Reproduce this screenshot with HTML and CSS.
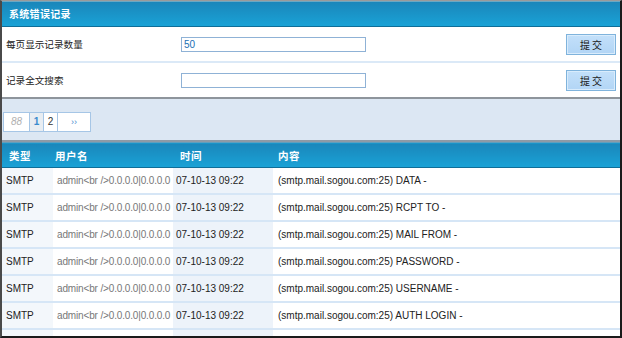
FILE: index.html
```html
<!DOCTYPE html>
<html>
<head>
<meta charset="utf-8">
<link rel="stylesheet" href="styles.css">
</head>
<body>
<div class="frame">
  <div class="titlebar">系统错误记录</div>
  <div class="formrow">
    <span class="label">每页显示记录数量</span>
    <input class="field" type="text" value="50">
    <button class="btn">提 交</button>
  </div>
  <div class="formrow last">
    <span class="label">记录全文搜索</span>
    <input class="field" type="text" value="">
    <button class="btn">提 交</button>
  </div>
  <div class="pager-panel">
    <div class="pager">
      <span class="pg dis">88</span>
      <span class="pg cur">1</span>
      <span class="pg">2</span>
      <span class="pg next">››</span>
    </div>
  </div>
  <table class="grid">
    <colgroup><col class="c1"><col class="c2"><col class="c3"><col class="c4"></colgroup>
    <thead>
      <tr><th class="h1">类型</th><th class="h2">用户名</th><th class="h3">时间</th><th class="h4">内容</th></tr>
    </thead>
    <tbody>
      <tr><td class="t">SMTP</td><td class="u">admin&lt;br /&gt;0.0.0.0|0.0.0.0</td><td class="d">07-10-13 09:22</td><td class="m">(smtp.mail.sogou.com:25) DATA -</td></tr>
      <tr><td class="t">SMTP</td><td class="u">admin&lt;br /&gt;0.0.0.0|0.0.0.0</td><td class="d">07-10-13 09:22</td><td class="m">(smtp.mail.sogou.com:25) RCPT TO -</td></tr>
      <tr><td class="t">SMTP</td><td class="u">admin&lt;br /&gt;0.0.0.0|0.0.0.0</td><td class="d">07-10-13 09:22</td><td class="m">(smtp.mail.sogou.com:25) MAIL FROM -</td></tr>
      <tr><td class="t">SMTP</td><td class="u">admin&lt;br /&gt;0.0.0.0|0.0.0.0</td><td class="d">07-10-13 09:22</td><td class="m">(smtp.mail.sogou.com:25) PASSWORD -</td></tr>
      <tr><td class="t">SMTP</td><td class="u">admin&lt;br /&gt;0.0.0.0|0.0.0.0</td><td class="d">07-10-13 09:22</td><td class="m">(smtp.mail.sogou.com:25) USERNAME -</td></tr>
      <tr><td class="t">SMTP</td><td class="u">admin&lt;br /&gt;0.0.0.0|0.0.0.0</td><td class="d">07-10-13 09:22</td><td class="m">(smtp.mail.sogou.com:25) AUTH LOGIN -</td></tr>
      <tr><td class="t">SMTP</td><td class="u">admin&lt;br /&gt;0.0.0.0|0.0.0.0</td><td class="d">07-10-13 09:22</td><td class="m">(smtp.mail.sogou.com:25) HELO/EHLO -</td></tr>
    </tbody>
  </table>
</div>
</body>
</html>
```
FILE: styles.css
```css
html, body {
  margin: 0;
  padding: 0;
  background: #fff;
}
body {
  font-family: "Liberation Sans", "Noto Sans CJK SC", sans-serif;
  font-size: 10px;
  color: #222;
}
.frame {
  width: 622px;
  height: 338px;
  box-sizing: border-box;
  border-top: 1px solid #9a9a9a;
  border-left: 2px solid #4a4a4a;
  border-right: 2px solid #1a1a1a;
  border-bottom: 2px solid #1a1a1a;
  overflow: hidden;
  background: #fff;
}
.titlebar {
  height: 24px;
  line-height: 25px;
  padding-left: 7px;
  color: #fff;
  font-weight: bold;
  font-size: 10px;
  letter-spacing: 0.3px;
  background: linear-gradient(#1a86ba, #1aa2d6);
  border-top: 1px solid #6aa8c4;
  border-bottom: 1px solid #0f6e98;
}
.formrow {
  height: 34px;
  display: flex;
  align-items: center;
  padding: 0 4px 0 4px;
  border-bottom: 2px solid #dbe9f7;
}
.formrow.last {
  border-bottom: 2px solid #8e959c;
}
.label {
  width: 175px;
  font-size: 9.6px;
  color: #222;
}
.field {
  width: 185px;
  height: 15px;
  box-sizing: border-box;
  margin: 0;
  padding: 0 2px;
  border: 1px solid #8fb2d6;
  font-family: "Liberation Sans", sans-serif;
  font-size: 10px;
  color: #1b6fb4;
  outline: none;
}
.btn {
  margin: 0 0 0 auto;
  width: 50px;
  height: 21px;
  padding: 0;
  border: 1px solid #7fb3dc;
  box-shadow: inset 0 0 0 1px #d9ecfc;
  background: linear-gradient(#c3e0fa, #b2d5f5);
  font-family: "Noto Sans CJK SC", sans-serif;
  font-size: 10px;
  color: #222;
  line-height: 19px;
}
.pager-panel {
  height: 41px;
  background: #dce7f3;
  border-bottom: 2px solid #8e9aa6;
  display: flex;
  align-items: center;
  padding-left: 1px;
}
.pager {
  display: flex;
  margin-top: 4px;
}
.pg {
  height: 18px;
  line-height: 18px;
  border: 1px solid #a6c6e6;
  margin-right: -1px;
  background: #fff;
  text-align: center;
  width: 13px;
  color: #333;
  font-size: 10px;
}
.pg.dis {
  width: 25px;
  color: #b0b0b0;
  font-style: italic;
}
.pg.cur {
  background: #e8edf2;
  color: #3a8bcd;
  font-weight: bold;
}
.pg.next {
  width: 32px;
  color: #4a8fd0;
  font-size: 9px;
}
.grid {
  width: 100%;
  border-collapse: collapse;
  table-layout: fixed;
}
.c1 { width: 51px; }
.c2 { width: 120px; }
.c3 { width: 100px; }
.grid th {
  height: 24px;
  padding: 0;
  text-align: left;
  color: #fff;
  font-weight: bold;
  font-size: 10.5px;
  letter-spacing: 0.5px;
  background: linear-gradient(#1a86ba, #1aa2d6);
  border-top: 1px solid #5f9fbf;
  border-bottom: 1px solid #0f6e98;
}
.grid th.h1 { padding-left: 7px; }
.grid th.h2 { padding-left: 2px; }
.grid th.h3 { padding-left: 7px; }
.grid th.h4 { padding-left: 5px; }
.grid td {
  height: 25px;
  padding: 0;
  border-bottom: 2px solid #d6e6f6;
  white-space: nowrap;
  overflow: hidden;
  font-size: 10px;
  color: #222;
}
.grid td.t {
  background: #f3f7fb;
  padding-left: 4px;
}
.grid td.u {
  color: #777;
  padding-left: 4px;
  letter-spacing: -0.15px;
}
.grid td.d {
  background: #edf3fa;
  padding-left: 3px;
}
.grid td.m {
  padding-left: 5px;
}
```
